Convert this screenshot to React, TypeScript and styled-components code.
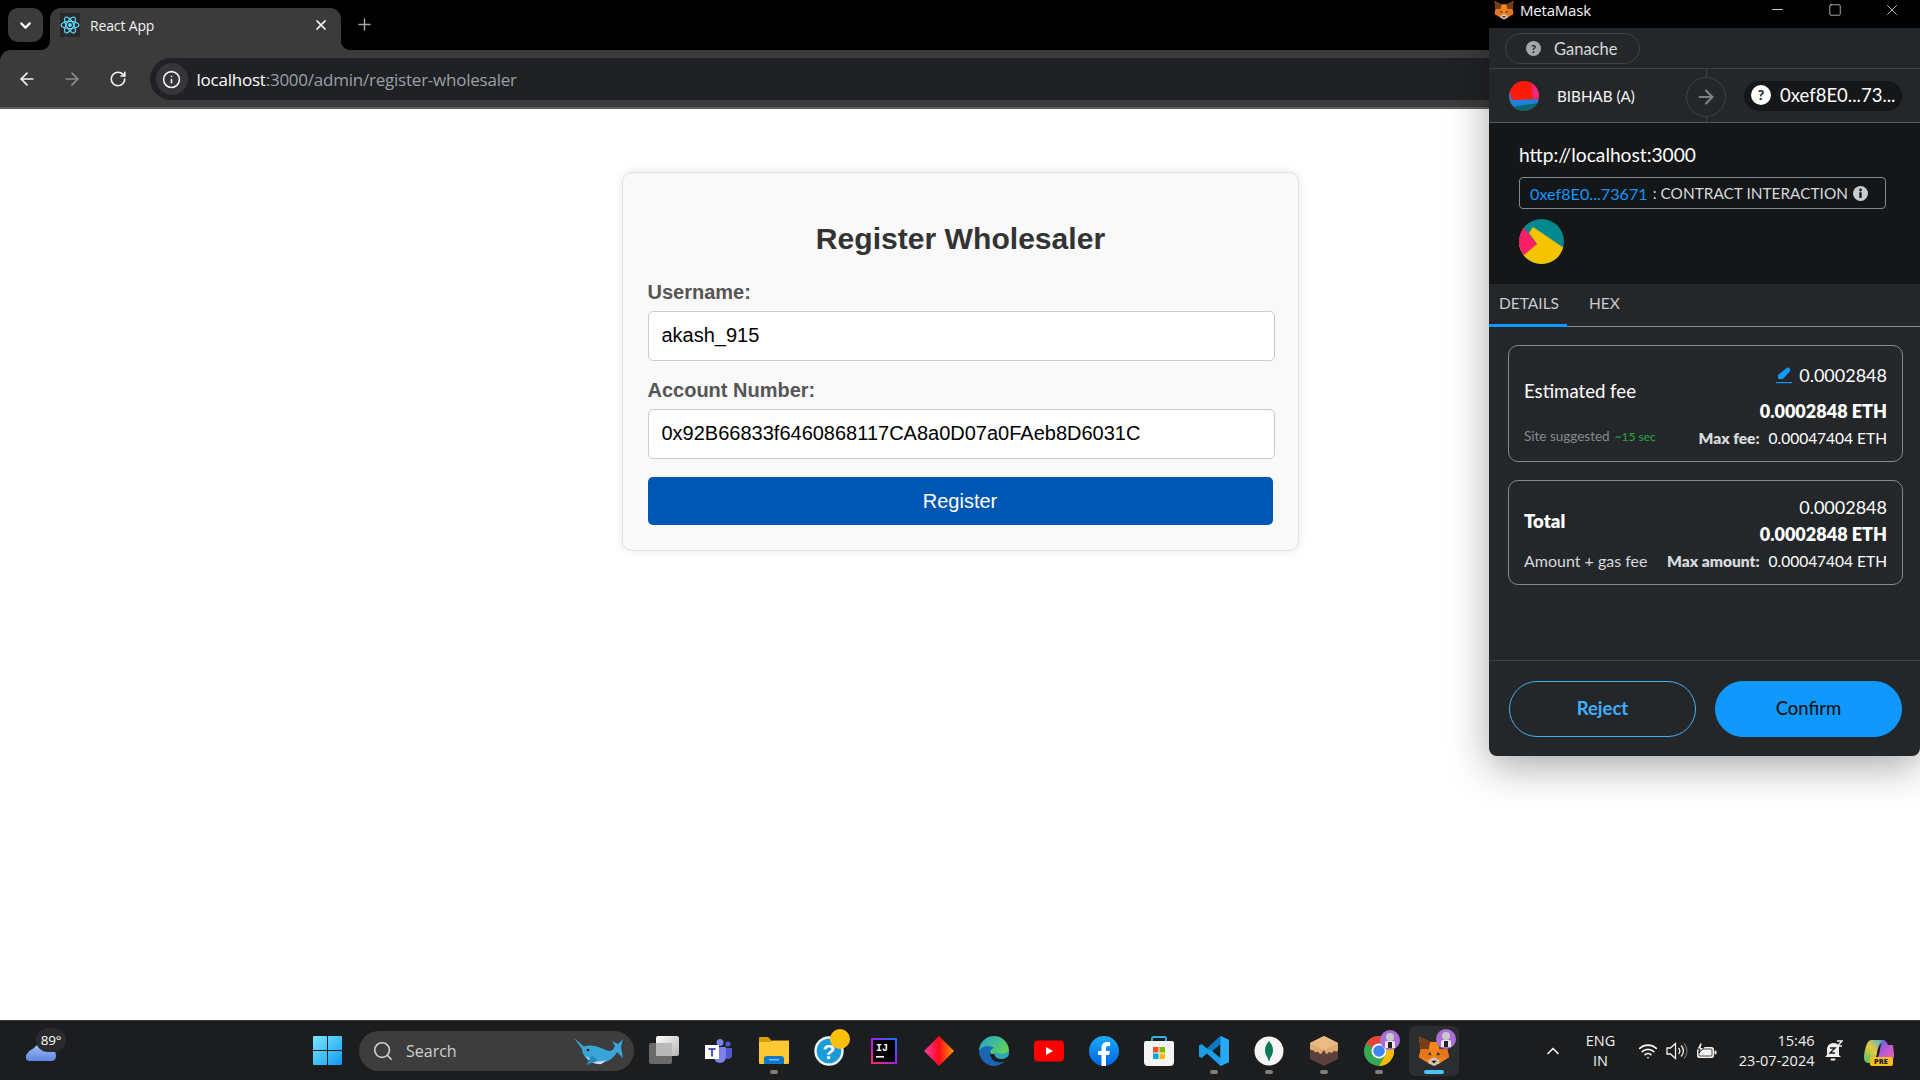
import React from "react";
import styled, { createGlobalStyle } from "styled-components";
import { ArrowLeft, ArrowRight, RotateCw, Info, Plus, X, ChevronDown, ChevronUp, Search, Wifi, Minus, Square } from "lucide-react";

const Global = createGlobalStyle`
  html, body { margin: 0; padding: 0; background: #fff; }
  * { box-sizing: border-box; }
`;

const ui = `"Open Sans", "Noto Sans", sans-serif`;
const mm = `Lato, "Open Sans", sans-serif`;

const Page = styled.div`
  position: relative; width: 1920px; height: 1080px; overflow: hidden;
  display: flex; flex-direction: column; background: #fff;
  font-family: "Liberation Sans", Arial, sans-serif;
`;

/* Browser chrome */
const TabStrip = styled.div`
  height: 50px; background: #000; display: flex; align-items: flex-start;
  padding: 8px 0 0 8px; flex: none; font-family: ${ui};
`;
const TabSearch = styled.div`
  width: 35px; height: 34px; border-radius: 10px; background: #3b3b3b; color: #fff;
  display: flex; align-items: center; justify-content: center;
`;
const Tab = styled.div`
  position: relative; margin-left: 7px; width: 291px; height: 42px; background: #3b3b3b;
  border-radius: 11px 11px 0 0; display: flex; align-items: center; padding: 0 12px 8px 10px; color: #fff;
  &::before, &::after {
    content: ""; position: absolute; bottom: 0; width: 10px; height: 10px;
  }
  &::before { left: -10px; background: radial-gradient(circle at 0 0, transparent 10px, #3b3b3b 10.5px); }
  &::after { right: -10px; background: radial-gradient(circle at 100% 0, transparent 10px, #3b3b3b 10.5px); }
`;
const TabTitle = styled.span`
  margin-left: 10px; flex: 1; font-size: 14px; color: #f2f2f2; letter-spacing: -0.15px;
`;
const NewTab = styled.div`
  margin-left: 14px; margin-top: 7px; color: #a5a5a5; display: flex;
`;
const ToolbarWrap = styled.div`
  background: #000; flex: none;
`;
const Toolbar = styled.div`
  height: 59px; background: #3b3b3b; border-bottom: 2px solid #5e5e5e; border-top-left-radius: 11px;
  display: flex; align-items: flex-start; padding: 8px 0 0 0; font-family: ${ui};
`;
const NavButton = styled.div<{ $dim?: boolean }>`
  width: 45.5px; height: 42px; display: flex; align-items: center; justify-content: center;
  color: ${(p) => (p.$dim ? "#8d8d8d" : "#f3f3f3")};
  &:first-child { margin-left: 4px; }
`;
const Omnibox = styled.div`
  margin-left: 9px; flex: 1; height: 42px; background: #202124; border-radius: 21px 0 0 21px;
  display: flex; align-items: center; padding-left: 6px;
`;
const InfoChip = styled.div`
  width: 32px; height: 32px; border-radius: 50%; background: #35363a; color: #f3f3f3;
  display: flex; align-items: center; justify-content: center;
`;
const Url = styled.div`
  margin-left: 9px; font-size: 17px; color: #9aa0a6; letter-spacing: -0.23px; white-space: nowrap;
  b { font-weight: 400; color: #fff; }
`;

/* Form */
const Main = styled.main`
  flex: 1; display: flex; justify-content: center; align-items: flex-start; padding-top: 63px; background: #fff;
`;
const Card = styled.form`
  width: 677px; height: 379px; background: #f9f9f9; border: 1px solid #e2e2e2; border-radius: 10px;
  box-shadow: 0 0 10px rgba(0, 0, 0, 0.1); padding: 49px 24px 0 25px;
`;
const Title = styled.h2`
  margin: 0 0 25px; text-align: center; font-size: 30.1px; line-height: 34px; font-weight: 700; color: #333;
`;
const Field = styled.div`
  margin-bottom: 18px; display: flex; flex-direction: column;
`;
const Label = styled.label`
  font-size: 20px; line-height: 22px; font-weight: 700; color: #555; margin-bottom: 8px;
`;
const Input = styled.input`
  width: 627px; height: 50px; border: 1px solid #ccc; border-radius: 5px; background: #fff;
  padding: 0 13px 2px; font-family: "Liberation Sans", Arial, sans-serif; font-size: 20px; color: #000; outline: none;
`;
const Submit = styled.button`
  display: block; width: 625px; height: 48px; border: 0; border-radius: 5px; background: #0056b3; color: #fff;
  font-family: "Liberation Sans", Arial, sans-serif; font-size: 20px; margin-top: 18px;
`;

/* MetaMask window */
const Popup = styled.div`
  position: absolute; left: 1489px; top: 0; width: 431px; height: 756px; background: #24272a;
  border-radius: 0 0 8px 8px; box-shadow: 0 10px 40px rgba(0, 0, 0, 0.35); overflow: hidden;
  display: flex; flex-direction: column; font-family: ${mm}; color: #fff;
`;
const TitleBar = styled.div`
  height: 28px; flex: none; background: #000; display: flex; align-items: center; padding: 0 0 9px 5px;
  font-family: ${ui}; font-size: 15px;
`;
const WinTitle = styled.span`
  margin-left: 6px; flex: 1; color: #f5f5f5; letter-spacing: -0.2px;
`;
const WinButton = styled.div`
  width: 57px; display: flex; justify-content: center; color: #e8e8e8;
`;
const NetworkRow = styled.div`
  height: 41px; flex: none; padding: 5px 0 0 16px; border-bottom: 1px solid #3f4245;
`;
const NetworkPill = styled.div`
  width: 135px; height: 31px; border: 1px solid #3f4245; border-radius: 16px;
  display: flex; align-items: center; padding-left: 20px; gap: 13px; font-size: 16.5px; color: #d6d9dc;
`;
const HelpDot = styled.span<{ $big?: boolean }>`
  width: ${(p) => (p.$big ? 20 : 15)}px; height: ${(p) => (p.$big ? 20 : 15)}px; border-radius: 50%;
  background: ${(p) => (p.$big ? "#fff" : "#a3a7ab")}; color: #24272a; font-size: ${(p) => (p.$big ? 14 : 11)}px;
  font-weight: 900; display: inline-flex; align-items: center; justify-content: center; flex: none;
`;
const AccountRow = styled.div`
  position: relative; height: 54px; flex: none; display: flex; align-items: center; padding-left: 20px;
  border-bottom: 1px solid #53565a;
`;
const AccountName = styled.span`
  margin-left: 18px; font-size: 15.2px; color: #f5f5f5; width: 142px;
`;
const ArrowCircle = styled.div`
  position: absolute; left: 197px; top: 8px; width: 40px; height: 40px; border-radius: 50%;
  background: #24272a; border: 1px solid #3f4245; display: flex; align-items: center; justify-content: center; color: #7d8288;
`;
const ArrowStem = styled.div`
  position: absolute; left: 217px; top: 0; bottom: 0; width: 1px; background: #3f4245;
`;
const Recipient = styled.div`
  margin-left: 45px; width: 158px; height: 30px; border-radius: 15px; background: #141618;
  display: flex; align-items: center; gap: 9px; padding: 0 0 2px 7px; font-size: 18.5px; color: #fff; white-space: nowrap;
`;
const Summary = styled.div`
  height: 161px; flex: none; background: #141618; padding: 19px 34px 0 30px;
`;
const Origin = styled.div`
  font-size: 19.2px; line-height: 26px; color: #fff;
`;
const ContractBox = styled.div`
  margin-top: 9px; width: 367px; height: 32px; border: 1px solid #85898e; border-radius: 4px;
  display: flex; align-items: center; padding-left: 10px; font-size: 15.4px; color: #d6d9dc; white-space: nowrap;
  span { color: #1098fc; margin-right: 5px; font-size: 16.2px; }
  svg { margin-left: 5px; }
`;
const BigAvatar = styled.div`
  margin-top: 10px; width: 45px; height: 45px; display: flex;
`;
const Tabs = styled.div`
  height: 43px; flex: none; display: flex; border-bottom: 1px solid #85898e;
`;
const TabItem = styled.div<{ $active?: boolean }>`
  height: 43px; padding: 0 ${(p) => (p.$active ? "10px" : "22px")} 3px; width: ${(p) => (p.$active ? "78px" : "auto")};
  display: flex; align-items: center; font-size: 15.5px; color: #c8cbcf;
  border-bottom: 3px solid ${(p) => (p.$active ? "#1098fc" : "transparent")};
`;
const Cards = styled.div`
  flex: 1; padding: 18px 17px 0 19px; display: flex; flex-direction: column; gap: 18px;
`;
const FeeCard = styled.div<{ $tall?: boolean }>`
  height: ${(p) => (p.$tall ? 117 : 105)}px; border: 1px solid #85898e; border-radius: 10px;
  padding: ${(p) => (p.$tall ? "19px" : "16px")} 15px 0 15px; display: flex; flex-direction: column;
`;
const FeeMain = styled.div`
  display: flex; justify-content: space-between; align-items: center;
`;
const FeeLabel = styled.div<{ $bold?: boolean }>`
  font-size: 18.6px; font-weight: ${(p) => (p.$bold ? 800 : 400)}; color: #fff; padding-bottom: ${(p) => (p.$bold ? 0 : 4)}px;
`;
const FeeValues = styled.div<{ $gap: number }>`
  display: flex; flex-direction: column; align-items: flex-end; gap: ${(p) => p.$gap}px;
`;
const Line = styled.div<{ $bold?: boolean }>`
  font-size: 18px; line-height: 20px; font-weight: ${(p) => (p.$bold ? 800 : 400)}; color: #fff;
  display: flex; align-items: center; gap: 7px;
`;
const FeeSub = styled.div<{ $top: number }>`
  margin-top: ${(p) => p.$top}px; display: flex; justify-content: space-between; align-items: center; line-height: 20px;
`;
const SubLeft = styled.span`
  padding-bottom: 3px;
`;
const Muted = styled.span<{ $bright?: boolean }>`
  font-size: ${(p) => (p.$bright ? 16 : 13.5)}px; color: ${(p) => (p.$bright ? "#d6d9dc" : "#85898e")};
`;
const Green = styled.span`
  font-size: 12px; color: #28a745; margin-left: 5px;
`;
const MaxLine = styled.span`
  font-size: 15.5px; color: #fff; white-space: nowrap;
  b { font-weight: 800; color: #d6d9dc; margin-right: 9px; }
`;
const Footer = styled.div`
  height: 96px; flex: none; border-top: 1px solid #3f4245; padding: 20px 18px 0 20px; display: flex; justify-content: space-between;
`;
const Action = styled.div<{ $primary?: boolean }>`
  width: 187px; height: 56px; border-radius: 28px; display: flex; align-items: center; justify-content: center; padding-bottom: 2px;
  font-size: 18.5px; font-weight: ${(p) => (p.$primary ? 500 : 700)};
  color: ${(p) => (p.$primary ? "#141618" : "#43aefc")};
  background: ${(p) => (p.$primary ? "#1098fc" : "transparent")};
  border: 1px solid ${(p) => (p.$primary ? "#1098fc" : "#43aefc")};
`;

/* Taskbar */
const Taskbar = styled.footer`
  height: 60px; flex: none; background: #1c1d1f; border-top: 1px solid #3a3a3a; display: flex; align-items: center;
  font-family: ${ui}; color: #fff;
`;
const Weather = styled.div`
  position: relative; width: 299.5px; height: 100%; padding: 22px 0 0 26px; flex: none;
`;
const TempBadge = styled.div`
  position: absolute; left: 36px; top: 7px; width: 30px; height: 24px; border-radius: 12px; background: #2a2a2c;
  font-size: 13.5px; letter-spacing: -0.3px; display: flex; align-items: center; justify-content: center;
`;
const Slot = styled.div<{ $dot?: boolean; $active?: boolean; $w?: number }>`
  position: relative; width: ${(p) => p.$w ?? 55}px; height: 50px; flex: none; display: flex; align-items: center; justify-content: center;
  ${(p) => p.$active && "background: #2c2d2f; border-radius: 6px; margin: 0 2.5px; width: 50px;"}
  ${(p) =>
    p.$dot || p.$active
      ? `&::after { content: ""; position: absolute; bottom: 2px; left: 50%; transform: translateX(-50%);
         width: ${p.$active ? 20 : 8}px; height: 4px; border-radius: 2px; background: ${p.$active ? "#4cc2ff" : "#7f7f7f"}; }`
      : ""}
`;
const SearchBox = styled.div`
  position: relative; margin: 0 2.5px 0 4.5px; width: 275px; height: 40px; border-radius: 20px; flex: none;
  background: #3d3d3d; display: flex; align-items: center; padding-left: 13px; gap: 12px;
  font-size: 16px; color: #d0d0d0;
`;
const WhaleWrap = styled.div`
  position: absolute; right: 10px; top: 7px; display: flex;
`;
const Tray = styled.div`
  margin-left: 76px; display: flex; align-items: center; flex: none;
`;
const LangBlock = styled.div`
  width: 42px; margin: 0 12px 0 12px; text-align: center; font-size: 14.5px; line-height: 20px; color: #f0f0f0;
`;
const TraySlot = styled.div<{ $w: number }>`
  width: ${(p) => p.$w}px; flex: none; display: flex; align-items: center; justify-content: center; color: #f2f2f2;
`;
const Clock = styled.div`
  width: 93px; text-align: right; font-size: 14.5px; line-height: 20px; color: #f0f0f0; white-space: nowrap; flex: none; margin-right: 4px;
`;
const PreTag = styled.div`
  position: relative; display: flex;
`;
const PreLabel = styled.span`
  position: absolute; left: 6px; bottom: -3px; width: 23px; height: 9px; background: #f7bd1d; border-radius: 2px;
  color: #1c1d1f; font-size: 7.5px; font-weight: 800; line-height: 9px; text-align: center;
`;
const IconBadgeWrap = styled.div`
  position: relative; display: flex;
`;
const PurpleBadge = styled.div`
  position: absolute; right: -6px; top: -6px; width: 20px; height: 20px; display: flex;
`;
const SunBadge = styled.div`
  position: absolute; right: -6px; top: -7px; width: 20px; height: 20px; border-radius: 50%; background: #fcbf0c;
`;

/* Drawings */
const ReactLogo = () => (
  <svg width="20" height="24" viewBox="0 0 20 24">
    <rect width="20" height="24" fill="#2a2a2a" />
    <g fill="none" stroke="#61dafb" strokeWidth="1.2">
      <ellipse cx="10" cy="12" rx="9" ry="3.6" />
      <ellipse cx="10" cy="12" rx="9" ry="3.6" transform="rotate(60 10 12)" />
      <ellipse cx="10" cy="12" rx="9" ry="3.6" transform="rotate(120 10 12)" />
    </g>
    <circle cx="10" cy="12" r="1.9" fill="#61dafb" />
  </svg>
);

const Fox = ({ size }: { size: number }) => (
  <svg width={size} height={size} viewBox="0 0 36 34">
    <path d="M1 1 L14 7 H22 L35 1 L33 15 L35 24 L24 31 H12 L1 24 L3 15 Z" fill="#e8821e" />
    <path d="M1 1 L14 7 L12 15 L3 15 Z" fill="#763d16" />
    <path d="M35 1 L22 7 L24 15 L33 15 Z" fill="#763d16" />
    <path d="M14 7 H22 L24 16 L18 24 L12 16 Z" fill="#f6851b" />
    <path d="M3 15 L12 16 L14 26 L1 24 Z" fill="#e4761b" />
    <path d="M33 15 L24 16 L22 26 L35 24 Z" fill="#e4761b" />
    <path d="M11 21 L14 18 L15 22 Z" fill="#233447" />
    <path d="M25 21 L22 18 L21 22 Z" fill="#233447" />
    <path d="M12 27 L18 24 L24 27 L24 31 L18 34 L12 31 Z" fill="#d7c1b3" />
    <path d="M15 28 H21 L18 31 Z" fill="#161616" />
  </svg>
);

const AccountAvatar = () => (
  <svg width="30" height="30" viewBox="0 0 30 30">
    <defs><clipPath id="acc"><circle cx="15" cy="15" r="15" /></clipPath></defs>
    <g clipPath="url(#acc)">
      <rect width="30" height="30" fill="#fb1a0b" />
      <path d="M22 0 L30 5 V17 L24 18 Z" fill="#f2277c" />
      <path d="M0 10 L3 19 L30 18 V24 L6 30 H0 Z" fill="#2181d8" />
      <path d="M0 26 L30 22 V30 H0 Z" fill="#066a73" />
    </g>
  </svg>
);

const ContractAvatar = () => (
  <svg width="45" height="45" viewBox="0 0 45 45">
    <defs><clipPath id="con"><circle cx="22.5" cy="22.5" r="22.5" /></clipPath></defs>
    <g clipPath="url(#con)">
      <rect width="45" height="45" fill="#03888f" />
      <path d="M14 8 L45 29 V45 H0 V26 L18 25 L10 14 Z" fill="#f5c400" />
      <path d="M0 9 L5 9 L18 25 L5 36 L0 36 Z" fill="#f91e66" />
    </g>
  </svg>
);

const Pencil = () => (
  <svg width="16" height="17" viewBox="0 0 16 17">
    <path d="M10 1.5 a2.4 2.4 0 0 1 3.6 3.2 L7 12 H2 V8 Z" fill="#1098fc" />
    <rect y="15" width="16" height="1.2" fill="#1098fc" />
  </svg>
);

const InfoSolid = () => (
  <svg width="15" height="15" viewBox="0 0 15 15">
    <circle cx="7.5" cy="7.5" r="7.5" fill="#c8cbcf" />
    <rect x="6.3" y="6.3" width="2.4" height="5.6" fill="#141618" />
    <circle cx="7.5" cy="4" r="1.4" fill="#141618" />
  </svg>
);

const WinLogo = () => (
  <svg width="29" height="29" viewBox="0 0 29 29">
    <defs>
      <linearGradient id="w" x1="0" y1="0" x2="1" y2="1">
        <stop offset="0" stopColor="#7ce6ff" />
        <stop offset="1" stopColor="#0f9bf5" />
      </linearGradient>
    </defs>
    <path d="M0 1 a1 1 0 0 1 1-1 H14 V14 H0 Z M15 0 H28 a1 1 0 0 1 1 1 V14 H15 Z M0 15 H14 V29 H1 a1 1 0 0 1-1-1 Z M15 15 H29 V28 a1 1 0 0 1-1 1 H15 Z" fill="url(#w)" />
  </svg>
);

const Cloud = () => (
  <svg width="31" height="18" viewBox="0 0 31 18">
    <defs>
      <linearGradient id="cl" x1="0" y1="0" x2="0" y2="1">
        <stop offset="0" stopColor="#9fbdf6" />
        <stop offset="1" stopColor="#5f86e0" />
      </linearGradient>
    </defs>
    <path d="M4 18 a4 4 0 0 1-3-7 C3 7 7 6 8 5 C10 1 16 0 19 4 C24 3 30 6 30 13 a5 5 0 0 1-4 5 Z" fill="url(#cl)" />
  </svg>
);

const Whale = () => (
  <svg width="50" height="27" viewBox="0 0 50 27">
    <path d="M0 0 L10 8.5 C13 7.5 17 7 21 8 C27 9.5 31 12 35 13 C38 13 40 11 41 8 L38 3 L44 6 L49 1 L47 9 L49 20 L43 14 C40 20 34 24 27 25 C22 26 15 24 11 19 C9 16 8 13 8 11 Z" fill="#3aa5d8" />
    <path d="M12 18 C17 23 26 25 32 22 C29 25 27 27 25 26 C19 26 14 23 12 18 Z" fill="#dcd6f2" />
    <path d="M18 17 L12 27 L24 23 Z" fill="#2488bd" />
    <circle cx="14" cy="12" r="1.3" fill="#111" />
  </svg>
);

const TaskView = () => (
  <svg width="32" height="30" viewBox="0 0 32 30">
    <defs>
      <linearGradient id="tv" x1="0" y1="0" x2="1" y2="1">
        <stop offset="0" stopColor="#fff" />
        <stop offset="1" stopColor="#b5b5b5" />
      </linearGradient>
    </defs>
    <rect x="1" y="7" width="23" height="21" rx="2" fill="#6a6a6a" />
    <rect x="8" y="0" width="23" height="20" rx="2" fill="url(#tv)" />
    <rect x="8" y="7" width="16" height="13" fill="#b9b9b9" />
  </svg>
);

const Teams = () => (
  <svg width="28" height="24" viewBox="0 0 28 24">
    <circle cx="15" cy="3.5" r="3.5" fill="#7b83eb" />
    <circle cx="23" cy="5" r="2.6" fill="#5059c9" />
    <path d="M19 9 H27 V16 a4 4 0 0 1-8 0 Z" fill="#5059c9" />
    <path d="M9 8 H21 V18 a6 6 0 0 1-12 0 Z" fill="#7b83eb" />
    <rect x="0" y="6" width="14" height="14" fill="#fff" />
    <path d="M3.5 9 H10.5 V11 H8 V17.5 H6 V11 H3.5 Z" fill="#4b53bc" />
  </svg>
);

const Folder = () => (
  <svg width="30" height="27" viewBox="0 0 30 27">
    <path d="M0 1 a1 1 0 0 1 1-1 H9 L13 4 H29 a1 1 0 0 1 1 1 V10 H0 Z" fill="#d99e0b" />
    <path d="M0 5 H11 L14 3.5 H30 V26 a1 1 0 0 1-1 1 H1 a1 1 0 0 1-1-1 Z" fill="#fcc933" />
    <path d="M5 21 a3 3 0 0 1 3-2 H22 a3 3 0 0 1 3 2 V27 H5 Z" fill="#1476c6" />
    <rect x="10" y="22" width="10" height="1.4" fill="#7fc4f5" />
  </svg>
);

const Help = () => (
  <svg width="30" height="30" viewBox="0 0 30 30">
    <circle cx="15" cy="15" r="13.5" fill="#1a9bd8" stroke="#e8f4fa" strokeWidth="2.4" />
    <text x="15" y="23" textAnchor="middle" fontFamily="Liberation Sans" fontWeight="700" fontSize="21" fill="#fff">?</text>
  </svg>
);

const Idea = () => (
  <svg width="26" height="26" viewBox="0 0 26 26">
    <defs>
      <linearGradient id="ij" x1="0" y1="1" x2="1" y2="0">
        <stop offset="0" stopColor="#fe315d" />
        <stop offset="0.5" stopColor="#a020f0" />
        <stop offset="1" stopColor="#087cfa" />
      </linearGradient>
    </defs>
    <rect width="26" height="26" fill="url(#ij)" />
    <rect x="2" y="2" width="22" height="22" fill="#000" />
    <text x="5" y="13" fontFamily="Liberation Mono" fontWeight="700" fontSize="10" fill="#fff">IJ</text>
    <rect x="5" y="18" width="8" height="1.6" fill="#fff" />
  </svg>
);

const Diamond = () => (
  <svg width="30" height="30" viewBox="0 0 30 30">
    <defs>
      <linearGradient id="dm" x1="0" y1="0" x2="1" y2="0">
        <stop offset="0" stopColor="#f23fa6" />
        <stop offset="0.5" stopColor="#ff0a1e" />
        <stop offset="1" stopColor="#ff9a00" />
      </linearGradient>
    </defs>
    <path d="M15 0 L30 15 L15 30 L0 15 Z" fill="url(#dm)" />
  </svg>
);

const Edge = () => (
  <svg width="30" height="30" viewBox="0 0 30 30">
    <defs>
      <linearGradient id="eg" x1="0" y1="0" x2="1" y2="0.6">
        <stop offset="0" stopColor="#1e9ed8" />
        <stop offset="1" stopColor="#5fd35a" />
      </linearGradient>
    </defs>
    <path d="M0 15 A15 15 0 0 1 30 15 L30 18 H12 C10 12 4 11 0 15 Z" fill="url(#eg)" />
    <path d="M0 15 C3 9 11 9 15 12 C11 13 10 17 12 21 C14 26 20 28 26 25 C22 29 18 30 15 30 C7 30 0 23 0 15 Z" fill="#1a66b5" />
    <path d="M30 18 C29 23 22 24 18 22 C15 20 15 17 16 16 C18 18 25 19 30 15 Z" fill="#2fa6c0" />
  </svg>
);

const Youtube = () => (
  <svg width="30" height="22" viewBox="0 0 30 22">
    <rect width="30" height="21" y="0.5" rx="4" fill="#ff0000" />
    <path d="M12 7 L19 11 L12 15 Z" fill="#fff" />
  </svg>
);

const Facebook = () => (
  <svg width="30" height="30" viewBox="0 0 30 30">
    <defs>
      <linearGradient id="fb" x1="0" y1="0" x2="0" y2="1">
        <stop offset="0" stopColor="#18acfe" />
        <stop offset="1" stopColor="#0163e0" />
      </linearGradient>
    </defs>
    <circle cx="15" cy="15" r="15" fill="url(#fb)" />
    <path d="M12.5 30 V19 H9 V15 H12.5 V12 C12.5 8 15 6 18 6 C19.5 6 21 6.3 21 6.3 V10 H19 C17.4 10 17 11 17 12 V15 H20.8 L20.2 19 H17 V30 Z" fill="#fff" />
  </svg>
);

const Store = () => (
  <svg width="30" height="30" viewBox="0 0 30 30">
    <path d="M8 6 V2.5 a1.5 1.5 0 0 1 1.5-1.5 H20.5 a1.5 1.5 0 0 1 1.5 1.5 V6" fill="none" stroke="#2fb3ea" strokeWidth="1.8" />
    <path d="M2 5 H28 a2 2 0 0 1 2 2 V26 a4 4 0 0 1-4 4 H4 a4 4 0 0 1-4-4 V7 a2 2 0 0 1 2-2 Z" fill="#f4f4f4" />
    <rect x="9" y="11" width="5.5" height="5.5" fill="#f25022" />
    <rect x="15.5" y="11" width="5.5" height="5.5" fill="#7fba00" />
    <rect x="9" y="17.5" width="5.5" height="5.5" fill="#00a4ef" />
    <rect x="15.5" y="17.5" width="5.5" height="5.5" fill="#ffb900" />
  </svg>
);

const VSCode = () => (
  <svg width="30" height="30" viewBox="0 0 30 30">
    <path d="M21.5 0 L30 4 V26 L21.5 30 L8 17.5 L2.5 22 L0 20.5 V9.5 L2.5 8 L8 12.5 Z M21.5 8 L13 15 L21.5 22 Z" fill="#1b9de8" fillRule="evenodd" />
    <path d="M21.5 0 L30 4 V26 L21.5 30 Z" fill="#27a9f5" />
    <path d="M21.5 0 V8 L13 15 L8 12.5 Z" fill="#0a78c4" />
  </svg>
);

const Mongo = () => (
  <svg width="30" height="30" viewBox="0 0 30 30">
    <circle cx="15" cy="15" r="14.5" fill="#f5f5f5" />
    <path d="M15 5 C19 9 20 15 18 19 C17 21 16 22 15.4 25 H14.6 C14 22 13 21 12 19 C10 15 11 9 15 5 Z" fill="#0f7a52" />
  </svg>
);

const BoxIcon = () => (
  <svg width="28" height="30" viewBox="0 0 28 30">
    <path d="M14 0 L28 7 V23 L14 30 L0 23 V7 Z" fill="#5b3f3c" />
    <path d="M14 0 L28 7 V14 C26 18 25 13 23 16 C21 19 20 14 18 17 C16 20 15 15 14 14 C12 16 11 20 9 17 C7 14 6 18 4 15 C2 13 1 15 0 13 V7 Z" fill="#deaa6e" />
    <path d="M14 0 L28 7 L14 14 L0 7 Z" fill="#eabb83" />
  </svg>
);

const ChromeIcon = () => (
  <svg width="30" height="30" viewBox="0 0 30 30">
    <circle cx="15" cy="15" r="15" fill="#34a853" />
    <path d="M15 0 A15 15 0 0 1 28 7.5 H15 A7.5 7.5 0 0 0 8.5 11.2 L2 7.5 A15 15 0 0 1 15 0 Z" fill="#ea4335" />
    <path d="M28 7.5 A15 15 0 0 1 15 30 L21.5 18.7 A7.5 7.5 0 0 0 21.5 11 Z" fill="#fbbc04" />
    <circle cx="15" cy="15" r="7.5" fill="#fff" />
    <circle cx="15" cy="15" r="5.8" fill="#4285f4" />
  </svg>
);

const Persona = () => (
  <svg width="20" height="20" viewBox="0 0 20 20">
    <circle cx="10" cy="10" r="10" fill="#a86fd6" />
    <circle cx="10" cy="7" r="4" fill="#c9c9c9" />
    <path d="M5 18 V13 a2 2 0 0 1 2-2 H13 a2 2 0 0 1 2 2 V18 Z" fill="#e8e8e8" />
    <path d="M8 12 H12 V18 H8 Z" fill="#222" />
  </svg>
);

const Speaker = () => (
  <svg width="22" height="18" viewBox="0 0 22 18" fill="none" stroke="#f2f2f2" strokeWidth="1.3">
    <path d="M1 6 H4.5 L9.5 1.5 V16.5 L4.5 12 H1 Z" />
    <path d="M12.5 6 a4 4 0 0 1 0 6" />
    <path d="M15 3.5 a7.5 7.5 0 0 1 0 11" />
    <path d="M18 1.5 a11 11 0 0 1 0 15" stroke="#666" />
  </svg>
);

const Battery = () => (
  <svg width="21" height="16" viewBox="0 0 21 16">
    <rect x="1" y="4" width="17" height="11" rx="2.5" fill="#f2f2f2" />
    <rect x="18.5" y="7.5" width="2" height="4" rx="1" fill="#f2f2f2" />
    <rect x="3" y="6" width="13" height="7" rx="1" fill="none" stroke="#1c1d1f" strokeWidth="0.8" />
    <path d="M4 0 L1 6 H4 L3 10 L8 4.5 H5 L6.5 0 Z" fill="#f2f2f2" stroke="#1c1d1f" strokeWidth="1" />
  </svg>
);

const Bell = () => (
  <svg width="18" height="22" viewBox="0 0 18 22">
    <path d="M2 15 V9 a6.5 6.5 0 0 1 12-3 L14 15 L16 17 H0 Z" fill="#f0f0f0" />
    <rect x="5.5" y="18.5" width="5" height="2" rx="1" fill="#f0f0f0" />
    <path d="M5 8 H10 L5 13 H10" fill="none" stroke="#1c1d1f" strokeWidth="1.4" />
    <path d="M12 1 H17 L12.5 6 H17" fill="none" stroke="#f0f0f0" strokeWidth="1.4" />
  </svg>
);

const Copilot = () => (
  <svg width="30" height="24" viewBox="0 0 30 24">
    <defs>
      <linearGradient id="c1" x1="0" y1="1" x2="1" y2="0">
        <stop offset="0" stopColor="#3ec16a" />
        <stop offset="0.5" stopColor="#e9c93d" />
        <stop offset="1" stopColor="#29a5e8" />
      </linearGradient>
      <linearGradient id="c2" x1="0" y1="0" x2="1" y2="1">
        <stop offset="0" stopColor="#2a6de8" />
        <stop offset="0.5" stopColor="#b657d8" />
        <stop offset="1" stopColor="#f36da0" />
      </linearGradient>
    </defs>
    <path d="M7 1 H21 C16 3 14 8 13 14 C12 20 9 24 5 24 C2 24 0 22 0 19 C0 12 3 1 7 1 Z" fill="url(#c1)" />
    <path d="M19 1 C21 1 23 3 24 6 H29 L30 16 C30 21 27 24 21 24 H8 C13 22 15 17 16 11 C17 6 17 2 19 1 Z" fill="url(#c2)" />
  </svg>
);

const App = () => (
  <Page>
    <Global />
    <TabStrip>
      <TabSearch><ChevronDown size={17} strokeWidth={3} /></TabSearch>
      <Tab>
        <ReactLogo />
        <TabTitle>React App</TabTitle>
        <X size={16} strokeWidth={2.6} />
      </Tab>
      <NewTab><Plus size={19} strokeWidth={1.8} /></NewTab>
    </TabStrip>
    <ToolbarWrap>
      <Toolbar>
        <NavButton><ArrowLeft size={20} strokeWidth={2} /></NavButton>
        <NavButton $dim><ArrowRight size={20} strokeWidth={2} /></NavButton>
        <NavButton><RotateCw size={18} strokeWidth={2.2} /></NavButton>
        <Omnibox>
          <InfoChip><Info size={19} strokeWidth={2} /></InfoChip>
          <Url><b>localhost</b>:3000/admin/register-wholesaler</Url>
        </Omnibox>
      </Toolbar>
    </ToolbarWrap>

    <Main>
      <Card>
        <Title>Register Wholesaler</Title>
        <Field>
          <Label htmlFor="username">Username:</Label>
          <Input id="username" readOnly value="akash_915" />
        </Field>
        <Field>
          <Label htmlFor="account">Account Number:</Label>
          <Input id="account" readOnly value="0x92B66833f6460868117CA8a0D07a0FAeb8D6031C" />
        </Field>
        <Submit type="button">Register</Submit>
      </Card>
    </Main>

    <Taskbar>
      <Weather>
        <Cloud />
        <TempBadge>89°</TempBadge>
      </Weather>
      <Slot><WinLogo /></Slot>
      <SearchBox>
        <Search size={22} strokeWidth={1.8} />
        Search
        <WhaleWrap><Whale /></WhaleWrap>
      </SearchBox>
      <Slot><TaskView /></Slot>
      <Slot><Teams /></Slot>
      <Slot $dot><Folder /></Slot>
      <Slot>
        <IconBadgeWrap><Help /><SunBadge /></IconBadgeWrap>
      </Slot>
      <Slot><Idea /></Slot>
      <Slot><Diamond /></Slot>
      <Slot><Edge /></Slot>
      <Slot><Youtube /></Slot>
      <Slot><Facebook /></Slot>
      <Slot><Store /></Slot>
      <Slot $dot><VSCode /></Slot>
      <Slot $dot><Mongo /></Slot>
      <Slot $dot><BoxIcon /></Slot>
      <Slot $dot>
        <IconBadgeWrap><ChromeIcon /><PurpleBadge><Persona /></PurpleBadge></IconBadgeWrap>
      </Slot>
      <Slot $active>
        <IconBadgeWrap><Fox size={32} /><PurpleBadge><Persona /></PurpleBadge></IconBadgeWrap>
      </Slot>
      <Tray>
        <TraySlot $w={30}><ChevronUp size={20} strokeWidth={2} /></TraySlot>
        <LangBlock>ENG<br />IN</LangBlock>
        <TraySlot $w={28}><Wifi size={20} strokeWidth={2} /></TraySlot>
        <TraySlot $w={30}><Speaker /></TraySlot>
        <TraySlot $w={30}><Battery /></TraySlot>
        <Clock>15:46<br />23-07-2024</Clock>
        <TraySlot $w={30}><Bell /></TraySlot>
        <TraySlot $w={60}>
          <PreTag><Copilot /><PreLabel>PRE</PreLabel></PreTag>
        </TraySlot>
      </Tray>
    </Taskbar>

    <Popup>
      <TitleBar>
        <Fox size={20} />
        <WinTitle>MetaMask</WinTitle>
        <WinButton><Minus size={17} strokeWidth={1.2} /></WinButton>
        <WinButton><Square size={14} strokeWidth={1.2} /></WinButton>
        <WinButton><X size={18} strokeWidth={1.1} /></WinButton>
      </TitleBar>
      <NetworkRow>
        <NetworkPill><HelpDot>?</HelpDot>Ganache</NetworkPill>
      </NetworkRow>
      <AccountRow>
        <ArrowStem />
        <AccountAvatar />
        <AccountName>BIBHAB (A)</AccountName>
        <ArrowCircle><ArrowRight size={22} strokeWidth={2.4} /></ArrowCircle>
        <Recipient><HelpDot $big>?</HelpDot>0xef8E0...73...</Recipient>
      </AccountRow>
      <Summary>
        <Origin>http://localhost:3000</Origin>
        <ContractBox><span>0xef8E0...73671</span>: CONTRACT INTERACTION<InfoSolid /></ContractBox>
        <BigAvatar><ContractAvatar /></BigAvatar>
      </Summary>
      <Tabs>
        <TabItem $active>DETAILS</TabItem>
        <TabItem>HEX</TabItem>
      </Tabs>
      <Cards>
        <FeeCard $tall>
          <FeeMain>
            <FeeLabel>Estimated fee</FeeLabel>
            <FeeValues $gap={16}>
              <Line><Pencil />0.0002848</Line>
              <Line $bold>0.0002848 ETH</Line>
            </FeeValues>
          </FeeMain>
          <FeeSub $top={4}>
            <SubLeft><Muted>Site suggested</Muted><Green>~15 sec</Green></SubLeft>
            <MaxLine><b>Max fee:</b>0.00047404 ETH</MaxLine>
          </FeeSub>
        </FeeCard>
        <FeeCard>
          <FeeMain>
            <FeeLabel $bold>Total</FeeLabel>
            <FeeValues $gap={7}>
              <Line>0.0002848</Line>
              <Line $bold>0.0002848 ETH</Line>
            </FeeValues>
          </FeeMain>
          <FeeSub $top={7}>
            <Muted $bright>Amount + gas fee</Muted>
            <MaxLine><b>Max amount:</b>0.00047404 ETH</MaxLine>
          </FeeSub>
        </FeeCard>
      </Cards>
      <Footer>
        <Action>Reject</Action>
        <Action $primary>Confirm</Action>
      </Footer>
    </Popup>
  </Page>
);

export default App;
